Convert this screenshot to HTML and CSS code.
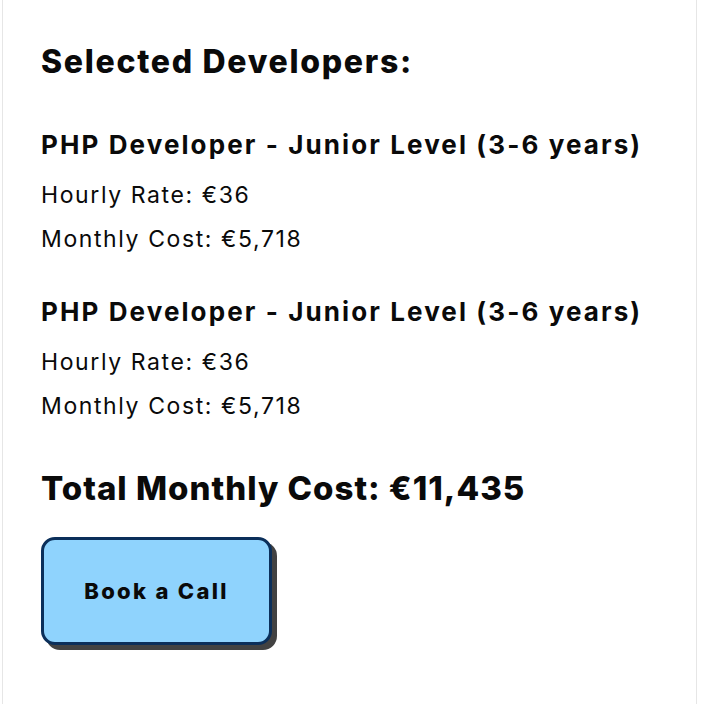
FILE: index.html
```html
<!DOCTYPE html>
<html>

<head>
  <title>Selected Developers</title>
  <link rel="stylesheet" href="styles.css">
</head>

<body>
  <div class="summary">
    <h2 class="summary-title">Selected Developers:</h2>

    <div class="dev">
      <h3 class="dev-name">PHP Developer - Junior Level (3-6 years)</h3>
      <p class="dev-line">Hourly Rate: €36</p>
      <p class="dev-line">Monthly Cost: €5,718</p>
    </div>

    <div class="dev">
      <h3 class="dev-name">PHP Developer - Junior Level (3-6 years)</h3>
      <p class="dev-line">Hourly Rate: €36</p>
      <p class="dev-line">Monthly Cost: €5,718</p>
    </div>

    <h2 class="total">Total Monthly Cost: €11,435</h2>

    <button class="book">Book a Call</button>
  </div>
</body>

</html>
```

FILE: styles.css
```css
body {
  margin: 0;
  background: #ffffff;
  font-family: Inter, "Open Sans", sans-serif;
  color: #0a0a0a;
}

.summary {
  /* card runs past the top and bottom of the view */
  margin-left: 2px;
  width: 695px;
  height: 704px;
  box-sizing: border-box;
  border-left: 1px solid #e6e6e6;
  border-right: 1px solid #e6e6e6;
  padding: 40px 0 0 38px;
}

.summary-title {
  margin: 0 0 42px;
  font-size: 32px;
  line-height: 44px;
  font-weight: 800;
  letter-spacing: 1.7px;
}

.dev {
  margin-bottom: 32px;
}

.dev-name {
  margin: 0 0 9px;
  font-size: 26px;
  line-height: 38px;
  font-weight: 700;
  letter-spacing: 2.1px;
}

.dev-line {
  margin: 0;
  font-size: 23px;
  line-height: 44px;
  letter-spacing: 1.6px;
}

.total {
  /* collapses with the margin of the last .dev */
  margin: 36px 0 25px;
  font-size: 33px;
  line-height: 48px;
  font-weight: 800;
  letter-spacing: 1px;
}

.book {
  display: block;
  width: 231px;
  height: 108px;
  background: #8fd3fd;
  border: 3px solid #0b2f5a;
  border-radius: 14px;
  box-shadow: 5px 5px 0 #424242;
  font-family: inherit;
  font-size: 22px;
  font-weight: 800;
  letter-spacing: 2.3px;
  color: #0a0a0a;
  cursor: pointer;
}
```
